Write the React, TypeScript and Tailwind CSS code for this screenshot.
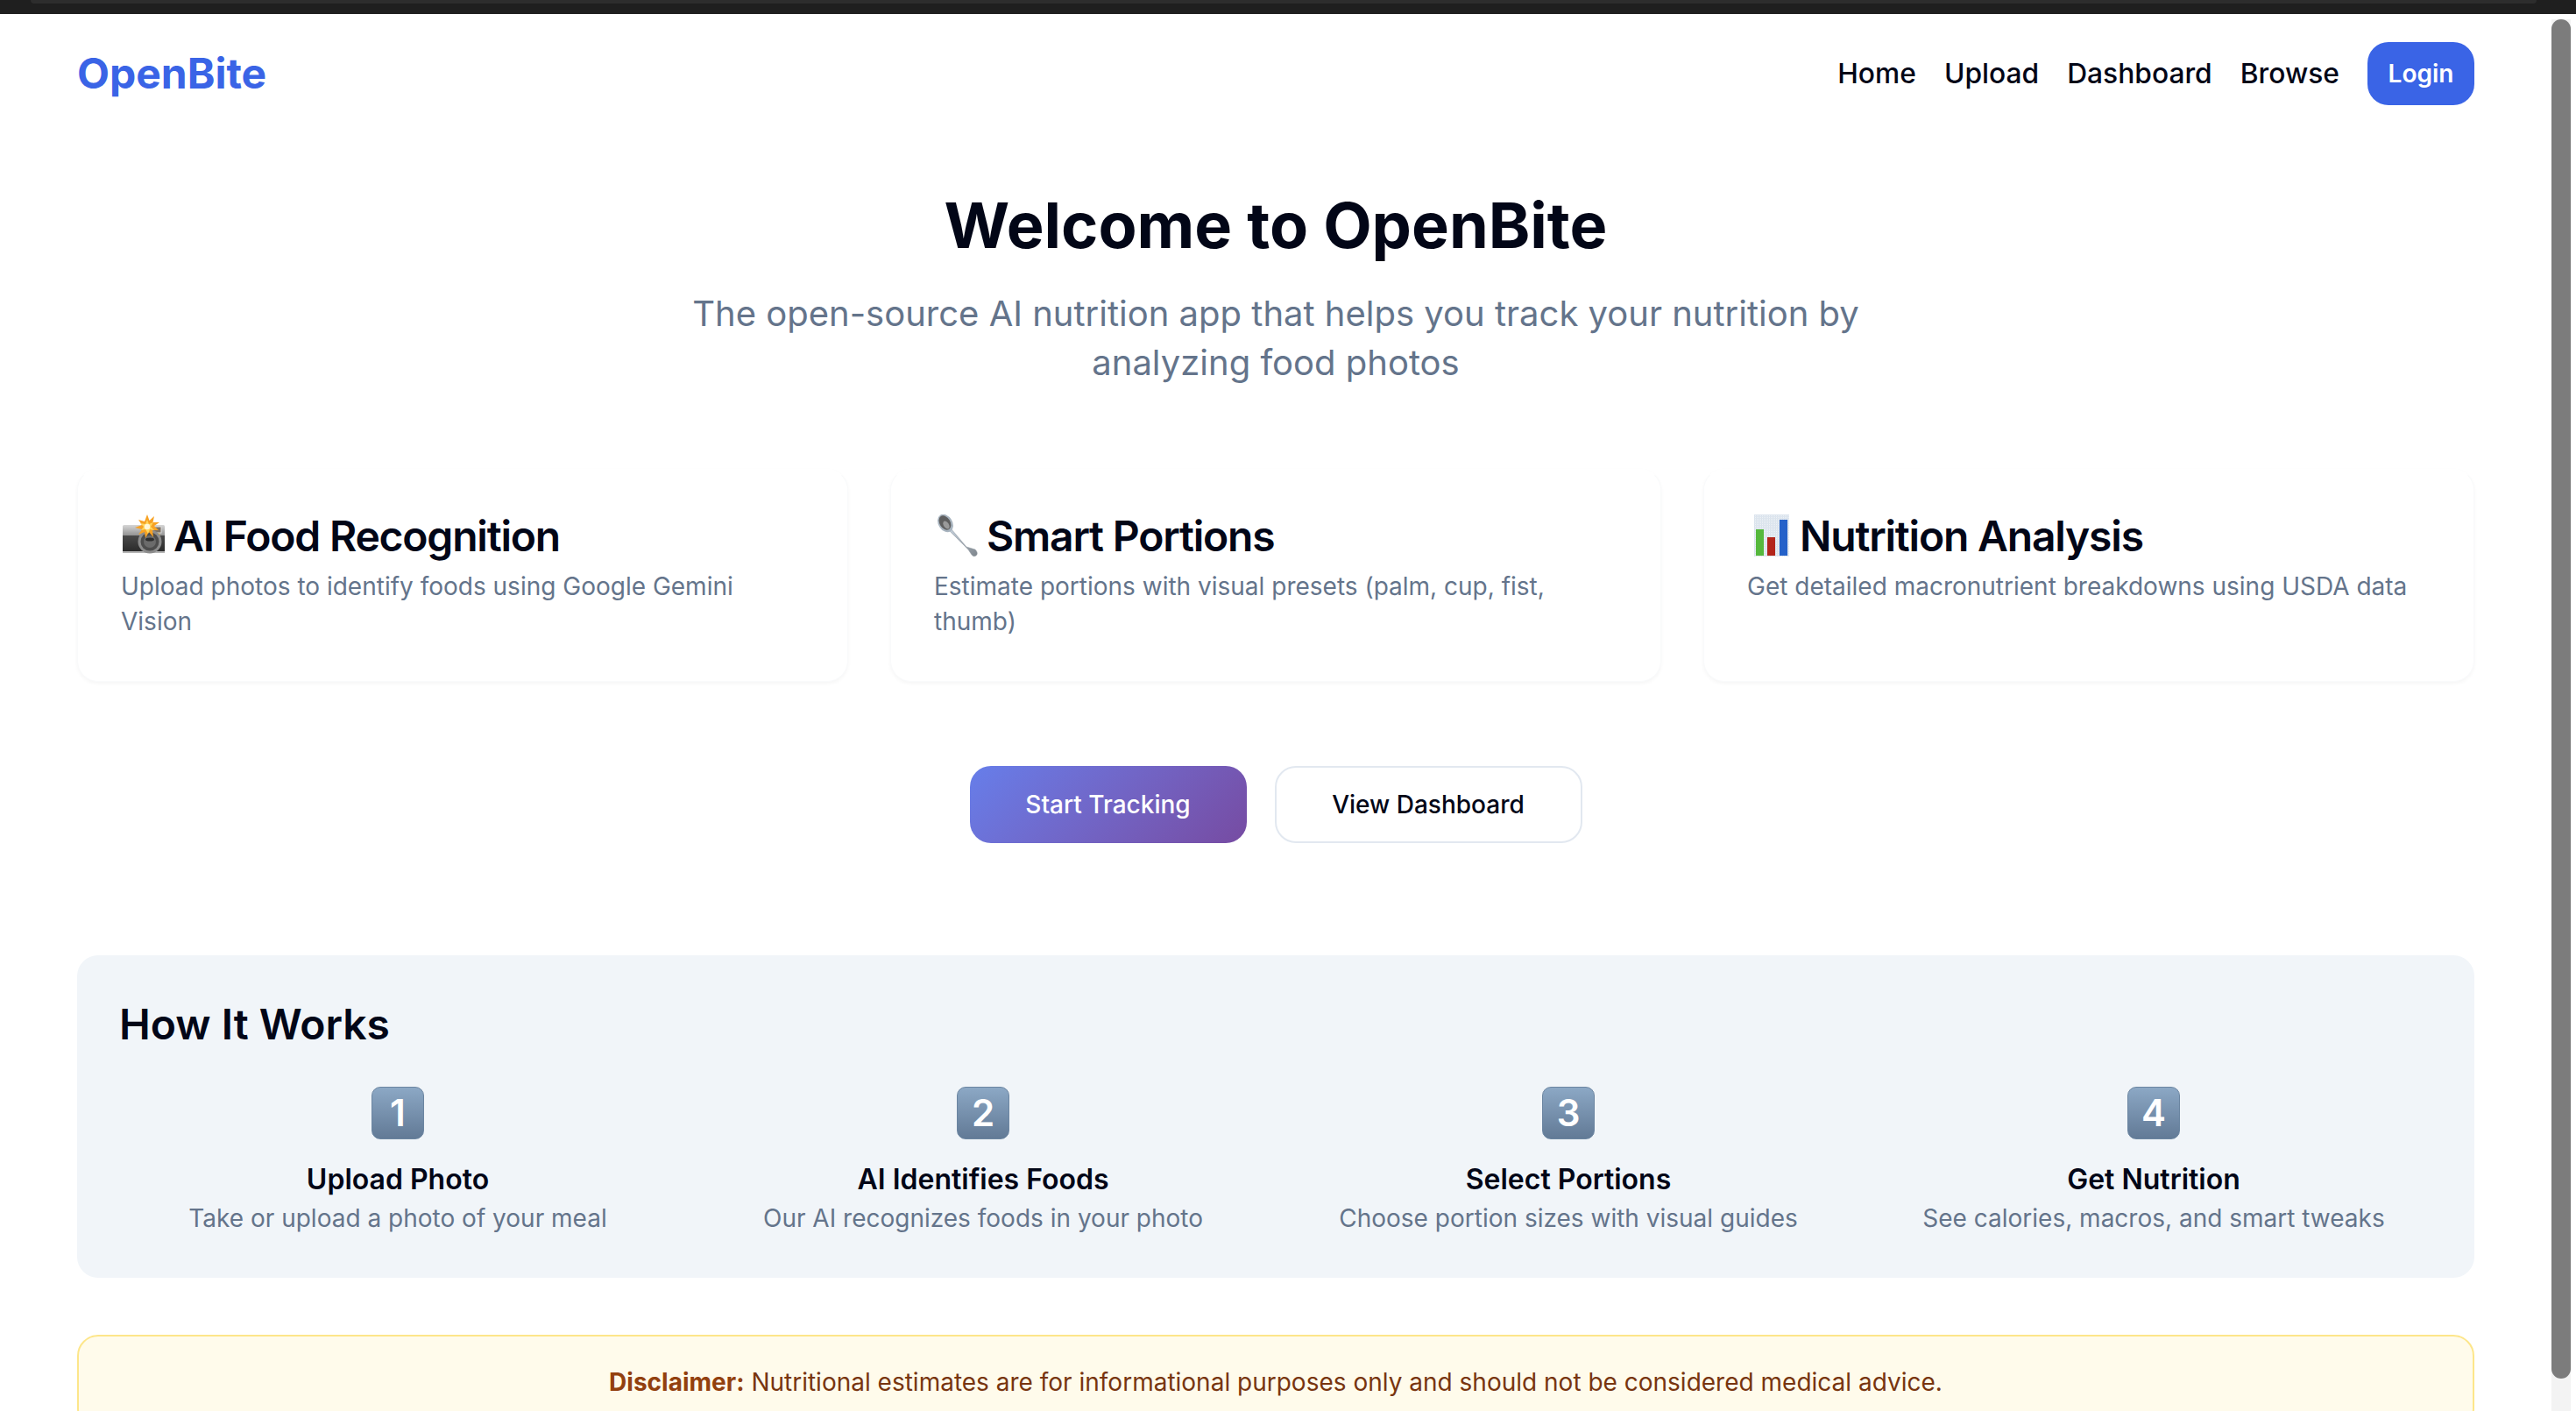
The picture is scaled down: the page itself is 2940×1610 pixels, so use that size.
import React from 'react';

const features = [
  { icon: 'camera', title: 'AI Food Recognition', text: 'Upload photos to identify foods using Google Gemini Vision' },
  { icon: 'spoon', title: 'Smart Portions', text: 'Estimate portions with visual presets (palm, cup, fist, thumb)' },
  { icon: 'chart', title: 'Nutrition Analysis', text: 'Get detailed macronutrient breakdowns using USDA data' },
];

const steps = [
  { n: '1', title: 'Upload Photo', text: 'Take or upload a photo of your meal' },
  { n: '2', title: 'AI Identifies Foods', text: 'Our AI recognizes foods in your photo' },
  { n: '3', title: 'Select Portions', text: 'Choose portion sizes with visual guides' },
  { n: '4', title: 'Get Nutrition', text: 'See calories, macros, and smart tweaks' },
];

function CameraIcon() {
  return (
    <svg width="50" height="50" viewBox="0 0 50 50" className="shrink-0">
      <defs>
        <linearGradient id="camTop" x1="0" y1="0" x2="0" y2="1">
          <stop offset="0" stopColor="#d6d6d6" />
          <stop offset="1" stopColor="#8d8d8d" />
        </linearGradient>
        <linearGradient id="camBody" x1="0" y1="0" x2="0" y2="1">
          <stop offset="0" stopColor="#4a4a4a" />
          <stop offset="1" stopColor="#2b2b2b" />
        </linearGradient>
      </defs>
      <rect x="2" y="12" width="48" height="13" rx="1.5" fill="url(#camTop)" />
      <rect x="2" y="24" width="48" height="18" fill="url(#camBody)" />
      <rect x="2" y="42" width="48" height="2" fill="#b5b5b5" />
      <rect x="36" y="14" width="10" height="7" fill="#7d7163" stroke="#d9d9d9" strokeWidth="1" />
      <circle cx="43" cy="23" r="1.4" fill="#f5b82e" />
      <circle cx="33" cy="31" r="13.5" fill="#8c8c8c" />
      <circle cx="33" cy="31" r="10.5" fill="#4d4d4d" />
      <circle cx="33" cy="31" r="7" fill="#6b6b6b" />
      <ellipse cx="33" cy="28.5" rx="5" ry="2" fill="#2e2e2e" />
      <polygon
        points="30,0 32.5,7 38,2 36.5,9 44,9 38,13 43,18 36,18 37,26 32,20 28,27 27,20 20,23 24,17 16,15 24,12 20,6 27,8"
        fill="#f7a224"
      />
      <polygon points="30,6 32,11 37,9 34,14 38,18 33,17 31,22 28,17 23,18 26,14 22,10 28,11" fill="#ffd75e" />
      <circle cx="30" cy="14" r="3.2" fill="#fff7d6" />
    </svg>
  );
}

function SpoonIcon() {
  return (
    <svg width="50" height="50" viewBox="0 0 50 50" className="shrink-0">
      <defs>
        <linearGradient id="spoonHandle" x1="0" y1="0" x2="1" y2="1">
          <stop offset="0" stopColor="#c4d0dc" />
          <stop offset="1" stopColor="#7e858c" />
        </linearGradient>
      </defs>
      <path d="M17 18 L20 17 L37 37 L47 40 Q51 44 48 47 Q45 49 43 46 L39 40 Z" fill="url(#spoonHandle)" stroke="#8c949c" strokeWidth="0.5" />
      <ellipse cx="13" cy="10" rx="8" ry="11" transform="rotate(-32 13 10)" fill="#a8b4bf" />
      <ellipse cx="12.5" cy="9.5" rx="6" ry="8.8" transform="rotate(-32 12.5 9.5)" fill="#5f5f5f" />
      <ellipse cx="14" cy="12" rx="3" ry="5" transform="rotate(-32 14 12)" fill="#9a9a9a" />
    </svg>
  );
}

function ChartIcon() {
  return (
    <svg width="50" height="50" viewBox="0 0 50 50" className="shrink-0">
      <defs>
        <pattern id="chartGrid" width="2" height="2" patternUnits="userSpaceOnUse">
          <rect width="2" height="2" fill="#eef2f6" />
          <rect width="1" height="2" fill="#d8e2ec" />
          <rect width="2" height="1" fill="#dde5ee" />
        </pattern>
      </defs>
      <rect x="8" y="0" width="40" height="48" fill="url(#chartGrid)" />
      <rect x="10" y="17" width="9" height="30" fill="#55b83c" />
      <rect x="23" y="26" width="9" height="21" fill="#b3251b" />
      <rect x="37" y="6" width="9" height="41" fill="#2461c9" />
    </svg>
  );
}

function FeatureIcon({ name }: { name: string }) {
  if (name === 'camera') return <CameraIcon />;
  if (name === 'spoon') return <SpoonIcon />;
  return <ChartIcon />;
}

export default function App() {
  return (
    <div className="flex h-screen flex-col overflow-hidden bg-white font-['Inter',sans-serif] text-[#020617]">
      <div className="h-4 shrink-0 bg-[#1f1f1f] pl-[35px] pr-[45px]">
        <div className="h-1 rounded-b-[10px] bg-[#2d2d2d]" />
      </div>

      <div className="flex min-h-0 flex-1">
        <main className="min-w-0 flex-1 px-[88px]">
          <header className="flex h-[104px] items-center justify-between pt-8">
            <a className="text-[48px] font-bold leading-[58px] text-[#3a64e6]">OpenBite</a>
            <nav className="flex items-center gap-8">
              <a className="text-[31.75px] font-medium">Home</a>
              <a className="text-[31.75px] font-medium">Upload</a>
              <a className="text-[31.75px] font-medium">Dashboard</a>
              <a className="text-[31.75px] font-medium">Browse</a>
              <button className="h-[72px] w-[122px] rounded-[24px] bg-[#3a64e6] text-[28px] font-semibold text-white">Login</button>
            </nav>
          </header>

          <section className="mt-[89px] text-center">
            <h1 className="text-[72px] font-bold leading-[96px]">Welcome to OpenBite</h1>
            <p className="mx-auto mt-[25px] max-w-[1440px] text-[40px] leading-[56px] text-[#64748b]">
              The open-source AI nutrition app that helps you track your nutrition by analyzing food photos
            </p>
          </section>

          <section className="mt-[93px] grid grid-cols-3 gap-12">
            {features.map((f) => (
              <div key={f.title} className="h-[243px] rounded-[24px] border border-[#f9fafb] border-t-white bg-white pl-[49px] pr-12 pt-12 shadow-[0_2px_4px_rgba(0,0,0,0.04)]">
                <h3 className="flex h-14 items-center gap-[10px] text-[48px] font-semibold tracking-[-0.025em]">
                  <FeatureIcon name={f.icon} />
                  {f.title}
                </h3>
                <p className="mt-[9px] text-[28px] leading-[40px] text-[#64748b]">{f.text}</p>
              </div>
            ))}
          </section>

          <div className="mt-24 flex justify-center gap-8">
            <button className="h-[88px] w-[316px] rounded-[24px] bg-linear-135 from-[#667eea] to-[#764ba2] text-[28px] font-medium text-white">Start Tracking</button>
            <button className="h-[88px] w-[351px] rounded-[24px] border-2 border-[#e2e8f0] bg-white text-[28px] font-medium">View Dashboard</button>
          </div>

          <section className="mt-32 rounded-[24px] bg-[#f1f5f9] p-12">
            <h2 className="text-[48px] font-semibold leading-[62px]">How It Works</h2>
            <div className="mt-10 grid grid-cols-4 gap-8">
              {steps.map((s) => (
                <div key={s.n} className="flex flex-col items-center text-center">
                  <div className="flex h-[60px] w-[60px] items-center justify-center rounded-[10px] border border-[#6b85a1] bg-linear-to-b from-[#8ca8c5] to-[#627a96] text-[42px] font-semibold leading-none text-white">
                    {s.n}
                  </div>
                  <h4 className="mt-6 text-[32px] font-semibold leading-[44px]">{s.title}</h4>
                  <p className="mt-0.5 text-[28px] leading-[40px] text-[#64748b]">{s.text}</p>
                </div>
              ))}
            </div>
          </section>

          <div className="mt-[65px] rounded-[24px] border-2 border-[#fde68a] bg-[#fffbeb] py-8 text-center text-[28px] leading-[40px] text-[#78350f]">
            <strong className="font-bold text-[#92400e]">Disclaimer:</strong> Nutritional estimates are for informational purposes only and should not be considered medical advice.
          </div>
        </main>

        <div className="w-7 shrink-0 pr-1.5 pt-1.5">
          <div className="h-full bg-[#f3f3f3]">
            <div className="h-[1551px] rounded-full bg-[#7c7c7c]" />
          </div>
        </div>
      </div>
    </div>
  );
}
